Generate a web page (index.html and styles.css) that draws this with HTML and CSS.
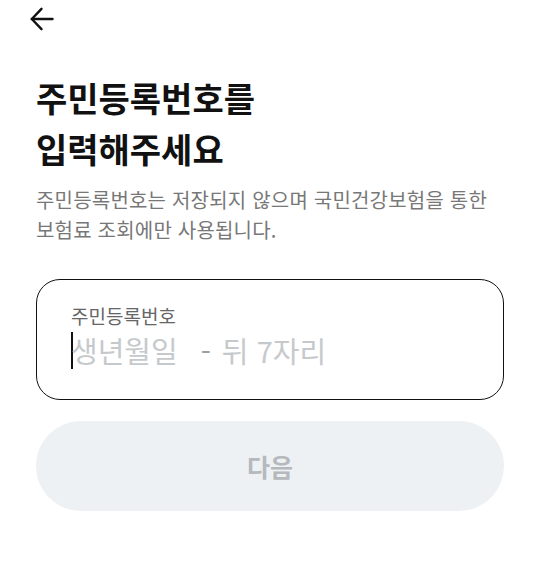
FILE: index.html
```html
<!DOCTYPE html>
<html lang="ko">
<head>
  <meta charset="UTF-8">
  <title>주민등록번호 입력</title>
  <link rel="stylesheet" href="styles.css">
</head>
<body>
  <header class="top-bar">
    <button class="back-btn" aria-label="뒤로">
      <svg width="24" height="24" viewBox="0 0 24 24" fill="none" stroke="#111" stroke-width="2.4" stroke-linecap="round" stroke-linejoin="round">
        <path d="M22.5 12H1.8"/>
        <path d="M11.5 1.8L1.8 12l9.7 10.2"/>
      </svg>
    </button>
  </header>

  <main class="content">
    <h1 class="title">주민등록번호를<br>입력해주세요</h1>
    <p class="desc">주민등록번호는 저장되지 않으며 국민건강보험을 통한<br>보험료 조회에만 사용됩니다.</p>

    <div class="field">
      <div class="field-label">주민등록번호</div>
      <div class="field-input">
        <span class="caret"></span>
        <span class="ph">생년월일</span>
        <span class="ph-dash">-</span>
        <span class="ph">뒤 7자리</span>
      </div>
    </div>

    <button class="next-btn" disabled>다음</button>
  </main>
</body>
</html>
```

FILE: styles.css
```css
body {
  margin: 0;
  padding: 0;
  background-color: #fff;
  font-family: "Noto Sans CJK KR", "Noto Sans", sans-serif;
  color: #111;
}
.top-bar {
  height: 38px;
  padding: 0 0 0 30px;
  display: flex;
  align-items: center;
}
.back-btn {
  border: none;
  background: none;
  padding: 0;
  display: flex;
  cursor: pointer;
}
.content {
  padding: 0 36px;
}
.title {
  margin: 34px 0 0 0;
  font-size: 34px;
  font-weight: 700;
  line-height: 51px;
}
.desc {
  margin: 11px 0 0 0;
  font-size: 20px;
  line-height: 30px;
  color: #777;
  letter-spacing: 0.2px;
}
.field {
  margin-top: 34px;
  height: 121px;
  border: 1.5px solid #111;
  border-radius: 24px;
  padding: 23px 34px 0;
  box-sizing: border-box;
}
.field-label {
  font-size: 19px;
  line-height: 26px;
  color: #666;
}
.field-input {
  display: flex;
  align-items: center;
  margin-top: 2px;
  font-size: 29px;
  line-height: 38px;
  color: #c6c9cc;
}
.caret {
  width: 2px;
  height: 37px;
  margin-right: -2px;
  background-color: #111;
}
.ph-dash {
  color: #9aa0a6;
  margin: 0 11px 0 23px;
}
.next-btn {
  display: block;
  width: 100%;
  height: 90px;
  margin-top: 21px;
  border: none;
  border-radius: 45px;
  background-color: #eef1f4;
  color: #b5b9bd;
  font-family: inherit;
  font-size: 25px;
  font-weight: 700;
}
```
